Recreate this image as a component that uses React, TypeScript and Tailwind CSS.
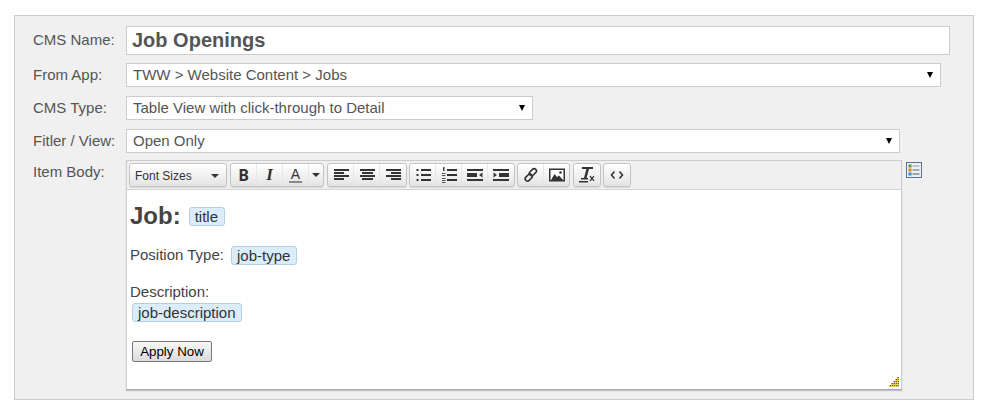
const fontStack = "font-['Liberation_Sans',Arial,sans-serif]";

function Bars({ rows }: { rows: [number, number][] }) {
  return (
    <svg width="16" height="16" viewBox="0 0 16 16" fill="#333">
      {rows.map(([x, w], i) => (
        <rect key={i} x={x} y={2 + i * 3} width={w} height="2" />
      ))}
    </svg>
  );
}

function ListIcon({ numbered }: { numbered?: boolean }) {
  return (
    <svg width="16" height="16" viewBox="0 0 16 16" fill="#333">
      <rect x="6" y="2" width="10" height="2" />
      <rect x="6" y="7" width="10" height="2" />
      <rect x="6" y="12" width="10" height="2" />
      {numbered ? (
        <>
          <rect x="2" y="0" width="1.5" height="4" fill="#444" />
          <rect x="1" y="6" width="3.5" height="1" fill="#555" />
          <rect x="1" y="8" width="3.5" height="1" fill="#555" />
          <rect x="1" y="11" width="3.5" height="1" fill="#555" />
          <rect x="1" y="13" width="3.5" height="1" fill="#555" />
          <rect x="1" y="15" width="3.5" height="1" fill="#555" />
        </>
      ) : (
        <>
          <rect x="1.5" y="2" width="2" height="2" />
          <rect x="1.5" y="7" width="2" height="2" />
          <rect x="1.5" y="12" width="2" height="2" />
        </>
      )}
    </svg>
  );
}

function IndentIcon({ outdent }: { outdent?: boolean }) {
  return (
    <svg width="16" height="16" viewBox="0 0 16 16" fill="#333">
      <rect x="0" y="2" width="16" height="2" />
      <rect x={outdent ? 0 : 6} y="6" width="10" height="4" />
      <rect x="0" y="12" width="16" height="2" />
      {outdent ? (
        <>
          <rect x="10" y="6" width="6" height="4" fill="#f4f4f4" />
          <path d="M15.5 5.5v5l-3.5-2.5z" />
        </>
      ) : (
        <path d="M0.5 5.5v5l3.5-2.5z" />
      )}
    </svg>
  );
}

function LinkIcon() {
  return (
    <svg width="16" height="16" viewBox="0 0 16 16" fill="none" stroke="#333" strokeWidth="1.6">
      <rect x="7.6" y="1.2" width="4.6" height="8" rx="2.3" transform="rotate(45 9.9 5.2)" />
      <rect x="3.4" y="6.6" width="4.6" height="8" rx="2.3" transform="rotate(45 5.7 10.6)" />
    </svg>
  );
}

function ImageIcon() {
  return (
    <svg width="16" height="16" viewBox="0 0 16 16">
      <rect x="0" y="1.5" width="16" height="13" fill="#333" />
      <rect x="1.5" y="3" width="13" height="10" fill="#fff" />
      <path d="M2 13l3.5-6 2.5 3 2-1.5 4 4.5z" fill="#333" />
      <circle cx="11.5" cy="5.5" r="1.3" fill="#333" />
    </svg>
  );
}

function ClearIcon() {
  return (
    <svg width="16" height="16" viewBox="0 0 16 16" fill="#333">
      <path d="M3 0h11v2h-4l-2.5 9H9v1.5H2V11h3l2.4-9H3z" />
      <rect x="0" y="14" width="9" height="1.5" />
      <path d="M10.5 9.5l1 -0.7 1.5 1.7 1.5-1.7 1 .7-1.7 2 1.7 2-1 .8-1.5-1.8-1.5 1.8-1-.8 1.7-2z" />
    </svg>
  );
}

function Btn({ children, w = "w-[26px]" }: { children?: React.ReactNode; w?: string }) {
  return <div className={`${w} h-full flex items-center justify-center border-r border-[#e6e6e6] last:border-r-0`}>{children}</div>;
}

function Group({ children }: { children: React.ReactNode }) {
  return (
    <div className="h-[24px] flex rounded-[3px] border border-[#c4c4c4] bg-gradient-to-b from-white to-[#e4e4e4] shadow-[0_1px_1px_rgba(0,0,0,0.1)]">
      {children}
    </div>
  );
}

function Caret() {
  return <span className="w-0 h-0 border-x-[4px] border-x-transparent border-t-[4px] border-t-[#333]" />;
}

function Pill({ children, pad = "pr-[5px]" }: { children: React.ReactNode; pad?: string }) {
  return (
    <span className={`inline-block h-[19px] leading-[17px] pl-[5px] ${pad} rounded-[3px] border border-[#b4cfe4] bg-[#dbecfb] text-[15px] text-[#333]`}>
      {children}
    </span>
  );
}

function Row({ label, mt, children }: { label: string; mt: string; children: React.ReactNode }) {
  return (
    <div className={`flex items-center ${mt}`}>
      <label className="w-[93px] text-[15px] text-[#555]">{label}</label>
      {children}
    </div>
  );
}

function Picker({ value, w }: { value: string; w: string }) {
  return (
    <div className={`${w} h-[24px] flex items-center justify-between bg-white border border-[#ccc] pl-[6px] pr-[6px] text-[15px] text-[#555]`}>
      <span>{value}</span>
      <span className="w-0 h-0 border-x-[3.5px] border-x-transparent border-t-[6px] border-t-black mr-[1px]" />
    </div>
  );
}

export default function App() {
  return (
    <div className={`${fontStack} w-[989px] h-[415px] bg-white pt-[15px] pl-[14px]`}>
      <div className="w-[960px] h-[385px] border border-[#ccc] bg-[#f0f0f0] pl-[18px] pt-[10px]">
        <Row label="CMS Name:" mt="mt-0">
          <input
            defaultValue="Job Openings"
            className="w-[824px] h-[29px] bg-white border border-[#ccc] pl-[5px] pr-[5px] pb-[2px] text-[20px] font-bold text-[#555] outline-none"
          />
        </Row>
        <Row label="From App:" mt="mt-[8px]">
          <Picker value="TWW > Website Content > Jobs" w="w-[815px]" />
        </Row>
        <Row label="CMS Type:" mt="mt-[9px]">
          <Picker value="Table View with click-through to Detail" w="w-[407px]" />
        </Row>
        <Row label="Fitler / View:" mt="mt-[9px]">
          <Picker value="Open Only" w="w-[774px]" />
        </Row>
        <div className="flex mt-[7px]">
          <label className="w-[93px] text-[15px] text-[#555] pt-[1px]">Item Body:</label>
          <div className="w-[776px] h-[230px] flex flex-col bg-white border border-[#ccc] border-b-[#aaa] shadow-[0_1px_1px_rgba(0,0,0,0.2)]">
            <div className="h-[29px] shrink-0 flex items-start gap-[3px] pl-[2px] pt-[2px] bg-[#f0f0f0] border-b border-[#d5d5d5]">
              <Group>
                <div className="w-[96px] flex items-center justify-between pl-[5px] pr-[7px] pt-[1px] text-[12px] text-[#333]">
                  <span>Font Sizes</span>
                  <Caret />
                </div>
              </Group>
              <Group>
                <Btn><span className="text-[16px] font-bold font-['Open_Sans',sans-serif] text-[#333]">B</span></Btn>
                <Btn><span className="text-[17px] italic font-bold font-['Liberation_Serif',serif] text-[#333]">I</span></Btn>
                <Btn>
                  <span className="text-[14px] leading-[14px] border-b-2 border-[#888] px-[2px] text-[#333]">A</span>
                </Btn>
                <Btn w="w-[14px]"><Caret /></Btn>
              </Group>
              <Group>
                <Btn><Bars rows={[[1, 15], [1, 10], [1, 15], [1, 10]]} /></Btn>
                <Btn><Bars rows={[[1, 15], [3, 11], [1, 15], [3, 11]]} /></Btn>
                <Btn><Bars rows={[[1, 15], [6, 10], [1, 15], [6, 10]]} /></Btn>
              </Group>
              <div className="-ml-[1px]">
                <Group>
                  <Btn><ListIcon /></Btn>
                  <Btn><ListIcon numbered /></Btn>
                  <Btn><IndentIcon outdent /></Btn>
                  <Btn><IndentIcon /></Btn>
                </Group>
              </div>
              <div className="-ml-[1px]">
                <Group>
                  <Btn w="w-[26px]"><LinkIcon /></Btn>
                  <Btn w="w-[25px]"><ImageIcon /></Btn>
                </Group>
              </div>
              <Group>
                <Btn><ClearIcon /></Btn>
              </Group>
              <div className="-ml-[1px]">
                <Group>
                  <Btn>
                    <svg width="14" height="12" viewBox="0 0 14 12" fill="none" stroke="#333" strokeWidth="1.6">
                      <path d="M4.5 2.5L1.5 6l3 3.5M9.5 2.5l3 3.5-3 3.5" />
                    </svg>
                  </Btn>
                </Group>
              </div>
            </div>
            <div className="relative flex-1 pl-[3px] text-[15px] text-[#444]">
              <div className="flex items-center gap-[8px] mt-[12px] h-[28px]">
                <span className="text-[24px] font-bold">Job:</span>
                <span className="mt-[2px]"><Pill pad="pr-[6px]">title</Pill></span>
              </div>
              <div className="flex items-center gap-[7px] mt-[15px] h-[20px]">
                <span>Position Type:</span>
                <Pill pad="pr-[6px]">job-type</Pill>
              </div>
              <div className="mt-[18px] h-[17px] leading-[17px]">Description:</div>
              <div className="mt-[2px] ml-[2px] h-[19px]"><Pill>job-description</Pill></div>
              <button className="block mt-[20px] ml-[2px] w-[80px] h-[21px] rounded-[2px] border border-[#777] bg-gradient-to-b from-[#f8f8f8] to-[#dcdcdc] text-[13.33px] text-black">
                Apply Now
              </button>
              <svg className="absolute right-[2px] bottom-[2px]" width="10" height="10" viewBox="0 0 10 10">
                {[[8, 0], [6, 2], [8, 2], [4, 4], [6, 4], [8, 4], [2, 6], [4, 6], [6, 6], [8, 6], [0, 8], [2, 8], [4, 8], [6, 8], [8, 8]].map(([x, y], i) => (
                  <g key={i}>
                    <rect x={x} y={y} width="1" height="1" fill="#e8b820" />
                    <rect x={x + 1} y={y} width="1" height="1" fill="#3a5f9a" />
                    <rect x={x} y={y + 1} width="2" height="1" fill="#f0d060" />
                  </g>
                ))}
              </svg>
            </div>
          </div>
          <svg className="ml-[4px] mt-[2px]" width="16" height="16" viewBox="0 0 16 16">
            <rect x="0.5" y="0.5" width="15" height="15" fill="#eef1f4" stroke="#5a7392" />
            <rect x="2.5" y="2.5" width="3" height="3" fill="#4f9a3c" />
            <rect x="2.5" y="6.5" width="3" height="3" fill="#d98a1e" />
            <rect x="2.5" y="10.5" width="3" height="3" fill="#2f8ac4" />
            <rect x="6.5" y="3.5" width="7" height="1" fill="#999" />
            <rect x="6.5" y="7.5" width="7" height="1" fill="#666" />
            <rect x="6.5" y="11.5" width="7" height="1" fill="#555" />
          </svg>
        </div>
      </div>
    </div>
  );
}
